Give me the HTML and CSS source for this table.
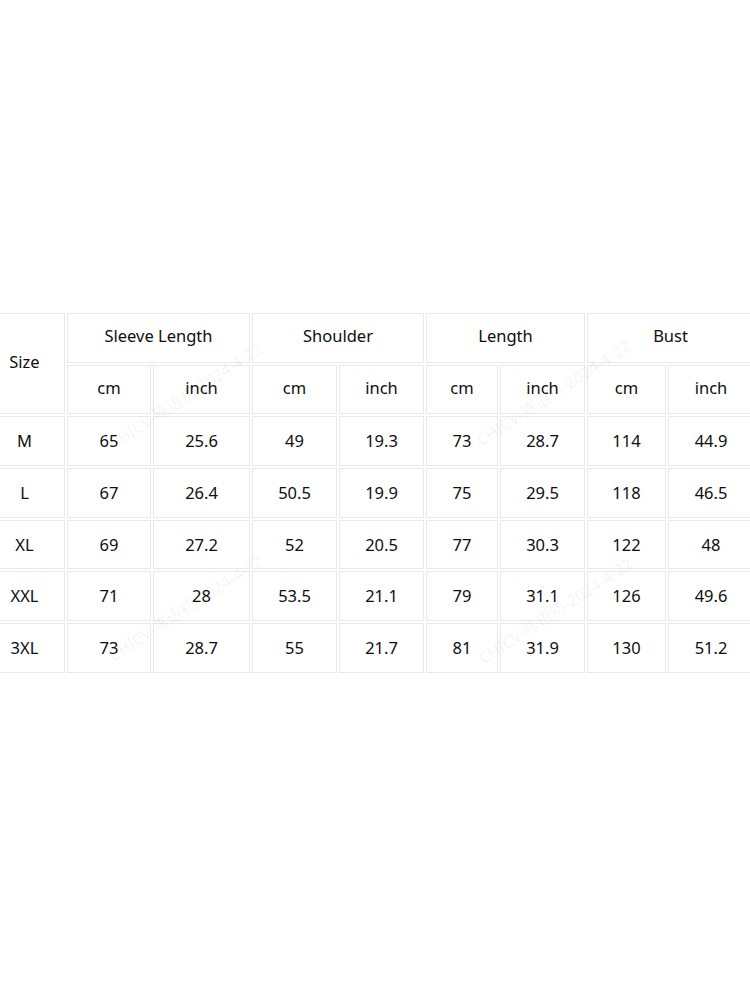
FILE: index.html
```html
<!DOCTYPE html>
<html lang="en">
<head>
<meta charset="utf-8">
<title>Size chart</title>
<link rel="stylesheet" href="styles.css">
</head>
<body>
<main class="sheet">
  <table class="sizes">
    <colgroup>
      <col class="c-size"><col class="c-84"><col class="c-97"><col class="c-85"><col class="c-85"><col class="c-72"><col class="c-85"><col class="c-79"><col class="c-86">
    </colgroup>
    <thead>
      <tr>
        <th rowspan="2">Size</th>
        <th colspan="2">Sleeve Length</th>
        <th colspan="2">Shoulder</th>
        <th colspan="2">Length</th>
        <th colspan="2">Bust</th>
      </tr>
      <tr>
        <th>cm</th><th>inch</th><th>cm</th><th>inch</th><th>cm</th><th>inch</th><th>cm</th><th>inch</th>
      </tr>
    </thead>
    <tbody>
      <tr><td>M</td><td>65</td><td>25.6</td><td>49</td><td>19.3</td><td>73</td><td>28.7</td><td>114</td><td>44.9</td></tr>
      <tr><td>L</td><td>67</td><td>26.4</td><td>50.5</td><td>19.9</td><td>75</td><td>29.5</td><td>118</td><td>46.5</td></tr>
      <tr><td>XL</td><td>69</td><td>27.2</td><td>52</td><td>20.5</td><td>77</td><td>30.3</td><td>122</td><td>48</td></tr>
      <tr><td>XXL</td><td>71</td><td>28</td><td>53.5</td><td>21.1</td><td>79</td><td>31.1</td><td>126</td><td>49.6</td></tr>
      <tr><td>3XL</td><td>73</td><td>28.7</td><td>55</td><td>21.7</td><td>81</td><td>31.9</td><td>130</td><td>51.2</td></tr>
    </tbody>
  </table>
  <span class="mark mark-1">CHICV-陈语初-2024-4-22</span>
  <span class="mark mark-2">CHICV-陈语初-2024-4-22</span>
  <span class="mark mark-3">CHICV-陈语初-2024-4-22</span>
  <span class="mark mark-4">CHICV-陈语初-2024-4-22</span>
</main>
</body>
</html>
```

FILE: styles.css
```css
html, body {
  margin: 0;
  padding: 0;
  background: #ffffff;
  overflow: hidden;
}

.sheet {
  position: relative;
  width: 750px;
  height: 1000px;
  padding-top: 311px;
  box-sizing: border-box;
  overflow: hidden;
}

.sizes {
  margin-left: -18px;
  border-collapse: separate;
  border-spacing: 2px;
  table-layout: fixed;
  width: 774px;
  font-family: "Noto Sans", "Noto Sans CJK SC", sans-serif;
  font-size: 16.5px;
  color: #0e0e0e;
}

.c-size { width: 81px; }
.c-84 { width: 84px; }
.c-97 { width: 97px; }
.c-85 { width: 85px; }
.c-72 { width: 72px; }
.c-79 { width: 79px; }
.c-86 { width: 86px; }

.sizes th,
.sizes td {
  border: 1px solid #e9e9e9;
  padding: 0 0 1px;
  text-align: center;
  vertical-align: middle;
  font-weight: normal;
  box-sizing: border-box;
}

.sizes th {
  padding-bottom: 4px;
}

.sizes tr {
  height: 49.7px;
}

.mark {
  position: absolute;
  font-family: "Noto Sans", "Noto Sans CJK SC", sans-serif;
  font-size: 16px;
  color: rgba(0, 0, 0, 0.06);
  white-space: nowrap;
  transform: translate(-50%, -50%) rotate(-33deg);
  pointer-events: none;
}

.mark-1 { left: 185px; top: 395px; }
.mark-2 { left: 553px; top: 392px; }
.mark-3 { left: 185px; top: 607px; }
.mark-4 { left: 555px; top: 610px; }
```
